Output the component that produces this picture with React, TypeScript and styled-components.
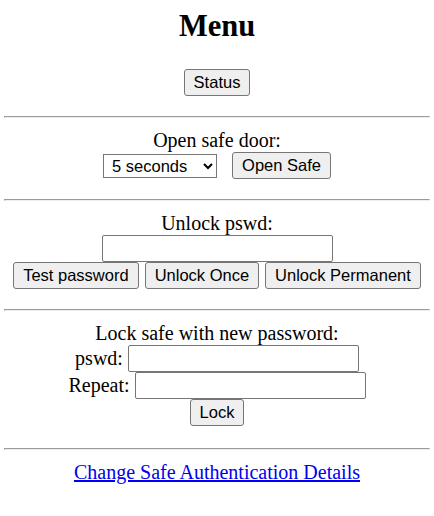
import styled, { createGlobalStyle } from "styled-components";

const GlobalStyle = createGlobalStyle`
    body {
        margin: 0;
        background: #ffffff;
        color: #000000;
        font-family: "Liberation Serif", "Times New Roman", serif;
        font-size: 20px;
    }
`;

const Page = styled.div`
    display: flex;
    flex-direction: column;
    align-items: stretch;
    padding: 8px 4px 0;
`;

const Title = styled.h1`
    margin: 0;
    font-size: 30.5px;
    line-height: 37px;
    font-weight: bold;
    text-align: center;
`;

const Divider = styled.hr<{ top?: number }>`
    margin: ${(props) => props.top ?? 20}px 0 0;
    height: 0;
    border-style: solid;
    border-width: 1px;
    border-color: #9a9a9a #eeeeee #eeeeee #9a9a9a;
`;

const Section = styled.div<{ top?: number }>`
    display: flex;
    flex-direction: column;
    align-items: center;
    padding-top: ${(props) => props.top ?? 11}px;
`;

const Label = styled.div`
    line-height: 23px;
`;

const Row = styled.div<{ gap?: number }>`
    display: flex;
    align-items: center;
    justify-content: center;
    gap: ${(props) => props.gap ?? 5}px;
`;

const Button = styled.button`
    height: 27px;
    padding: 0 9px;
    border: 1px solid #767676;
    border-radius: 3px;
    background: #efefef;
    color: #000000;
    font-family: "Liberation Sans", Arial, sans-serif;
    font-size: 16.5px;
    line-height: 19px;
`;

const Select = styled.select`
    width: 114px;
    height: 24px;
    padding: 0 0 0 4px;
    border: 1px solid #767676;
    border-radius: 0;
    background: #ffffff;
    color: #000000;
    font-family: "Liberation Sans", Arial, sans-serif;
    font-size: 16.5px;
`;

const TextInput = styled.input`
    box-sizing: border-box;
    width: 231px;
    height: 27px;
    padding: 1px 2px;
    border: 1px solid #767676;
    border-radius: 2px;
    background: #ffffff;
    font-family: "Liberation Sans", Arial, sans-serif;
    font-size: 16px;
`;

const Link = styled.a`
    color: #0000ee;
    text-decoration: underline;
    line-height: 23px;
`;

export default function App() {
    return (
        <>
            <GlobalStyle />
            <Page>
                <Title>Menu</Title>
                <Section top={24}>
                    <Button>Status</Button>
                </Section>

                <Divider />
                <Section>
                    <Label>Open safe door:</Label>
                    <Row gap={15}>
                        <Select defaultValue="5">
                            <option value="5">5 seconds</option>
                            <option value="10">10 seconds</option>
                            <option value="30">30 seconds</option>
                        </Select>
                        <Button>Open Safe</Button>
                    </Row>
                </Section>

                <Divider />
                <Section>
                    <Label>Unlock pswd:</Label>
                    <TextInput type="password" />
                    <Row gap={6}>
                        <Button>Test password</Button>
                        <Button>Unlock Once</Button>
                        <Button>Unlock Permanent</Button>
                    </Row>
                </Section>

                <Divider />
                <Section>
                    <Label>Lock safe with new password:</Label>
                    <Row>
                        <Label>pswd:</Label>
                        <TextInput type="password" />
                    </Row>
                    <Row>
                        <Label>Repeat:</Label>
                        <TextInput type="password" />
                    </Row>
                    <Button>Lock</Button>
                </Section>

                <Divider top={22} />
                <Section>
                    <Link href="#">Change Safe Authentication Details</Link>
                </Section>
            </Page>
        </>
    );
}
